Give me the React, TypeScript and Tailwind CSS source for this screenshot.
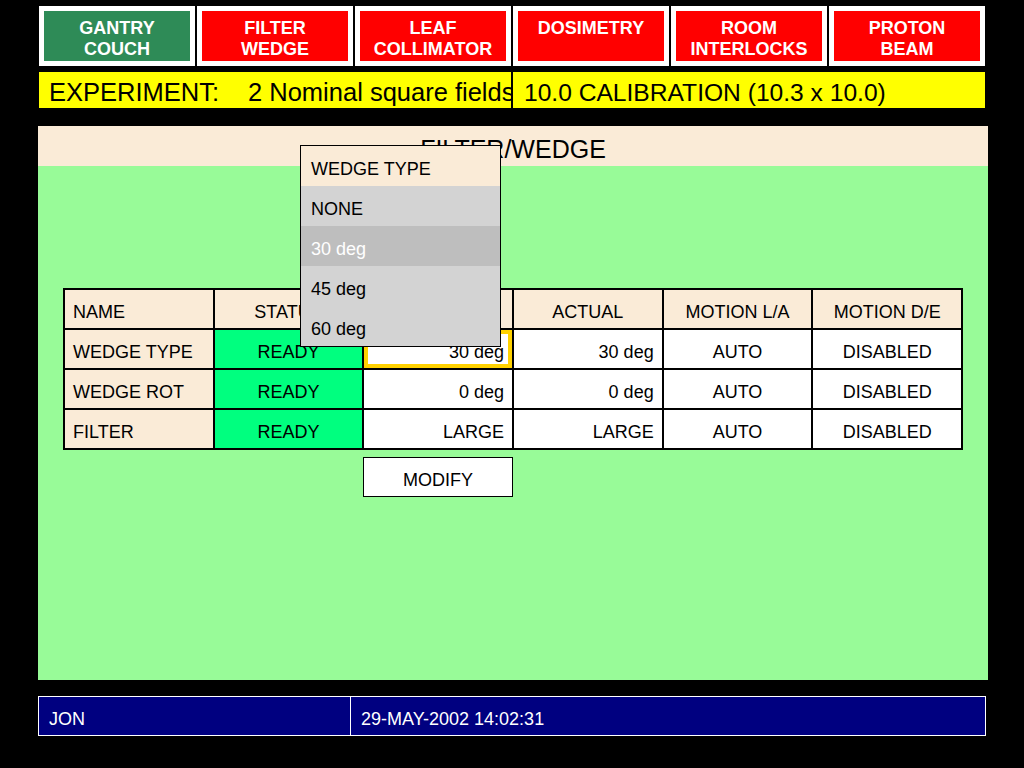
const tabs = [
  { label: ['GANTRY', 'COUCH'], active: true },
  { label: ['FILTER', 'WEDGE'], active: false },
  { label: ['LEAF', 'COLLIMATOR'], active: false },
  { label: ['DOSIMETRY'], active: false },
  { label: ['ROOM', 'INTERLOCKS'], active: false },
  { label: ['PROTON', 'BEAM'], active: false },
];

const rows = [
  { name: 'WEDGE TYPE', status: 'READY', set: '30 deg', actual: '30 deg', la: 'AUTO', de: 'DISABLED', focus: true },
  { name: 'WEDGE ROT', status: 'READY', set: '0 deg', actual: '0 deg', la: 'AUTO', de: 'DISABLED', focus: false },
  { name: 'FILTER', status: 'READY', set: 'LARGE', actual: 'LARGE', la: 'AUTO', de: 'DISABLED', focus: false },
];

const options = ['NONE', '30 deg', '45 deg', '60 deg'];

export default function App() {
  return (
    <div className="w-[1024px] h-[768px] bg-black overflow-hidden font-['Liberation_Sans',Arial,sans-serif] text-black">
      {/* subsystem tabs */}
      <div className="flex gap-[2px] pl-[39px] pt-[6px]">
        {tabs.map((t) => (
          <div
            key={t.label.join(' ')}
            className={`w-[156px] h-[60px] border-[5px] border-white pt-[7px] text-center text-white font-bold text-[18px] leading-[21px] ${
              t.active ? 'bg-[#2e8b57]' : 'bg-[#ff0000]'
            }`}
          >
            {t.label.map((l) => (
              <div key={l}>{l}</div>
            ))}
          </div>
        ))}
      </div>

      {/* experiment bar */}
      <div className="ml-[39px] mt-[6px] w-[946px] h-[36px] bg-[#ffff00] flex leading-none whitespace-nowrap">
        <div className="w-[474px] shrink-0 overflow-hidden border-r-2 border-black flex items-center pl-[10px] pt-[6px] text-[25.5px]">
          <span className="inline-block w-[199px] shrink-0">EXPERIMENT:</span>
          <span>2 Nominal square fields</span>
        </div>
        <div className="flex-1 flex items-center pl-[11px] pt-[6px] text-[24.6px]">10.0 CALIBRATION (10.3 x 10.0)</div>
      </div>

      {/* main panel */}
      <div className="relative ml-[38px] mt-[18px] w-[950px] h-[554px] bg-[#98fb98]">
        <div className="h-[40px] bg-[#faebd7] flex items-center justify-center pt-[7px] text-[25px]">FILTER/WEDGE</div>

        <div className="ml-[25px] mt-[122px] w-[900px] grid grid-cols-6 gap-[2px] p-[2px] bg-black text-[18px]">
          <div className="h-[38px] bg-[#faebd7] flex items-center pt-[7px] pl-[8px]">NAME</div>
          <div className="h-[38px] bg-[#faebd7] flex items-center justify-center pt-[7px]">STATUS</div>
          <div className="h-[38px] bg-[#faebd7] flex items-center justify-center pt-[7px]">SETTING</div>
          <div className="h-[38px] bg-[#faebd7] flex items-center justify-center pt-[7px]">ACTUAL</div>
          <div className="h-[38px] bg-[#faebd7] flex items-center justify-center pt-[7px]">MOTION L/A</div>
          <div className="h-[38px] bg-[#faebd7] flex items-center justify-center pt-[7px]">MOTION D/E</div>
          {rows.map((r) => (
            <div key={r.name} className="contents">
              <div className="h-[38px] bg-[#faebd7] flex items-center pt-[7px] pl-[8px]">{r.name}</div>
              <div className="h-[38px] bg-[#00ff7f] flex items-center justify-center pt-[7px]">{r.status}</div>
              <div
                className={`h-[38px] bg-white flex items-center justify-end pt-[7px] pr-[8px] ${
                  r.focus ? 'shadow-[inset_0_0_0_4px_#ffd200]' : ''
                }`}
              >
                {r.set}
              </div>
              <div className="h-[38px] bg-white flex items-center justify-end pt-[7px] pr-[8px]">{r.actual}</div>
              <div className="h-[38px] bg-white flex items-center justify-center pt-[7px]">{r.la}</div>
              <div className="h-[38px] bg-white flex items-center justify-center pt-[7px]">{r.de}</div>
            </div>
          ))}
        </div>

        <div className="ml-[325px] mt-[7px] w-[150px] h-[40px] bg-white border border-black flex items-center justify-center pt-[6px] text-[18px]">
          MODIFY
        </div>

        {/* wedge type menu */}
        <div className="absolute left-[262px] top-[19px] w-[201px] border border-black bg-[#d3d3d3] text-[18px]">
          <div className="h-[40px] bg-[#faebd7] flex items-center pl-[10px] pt-[6px]">WEDGE TYPE</div>
          {options.map((o) => (
            <div
              key={o}
              className={`h-[40px] flex items-center pl-[10px] pt-[6px] ${
                o === '30 deg' ? 'bg-[#bebebe] text-white' : 'bg-[#d3d3d3]'
              }`}
            >
              {o}
            </div>
          ))}
        </div>
      </div>

      {/* status footer */}
      <div className="ml-[38px] mt-[16px] w-[948px] h-[40px] bg-[#000080] border border-white flex text-white text-[18px]">
        <div className="w-[312px] border-r border-white flex items-center pl-[10px] pt-[7px]">JON</div>
        <div className="flex-1 flex items-center pl-[10px] pt-[7px]">29-MAY-2002 14:02:31</div>
      </div>
    </div>
  );
}
